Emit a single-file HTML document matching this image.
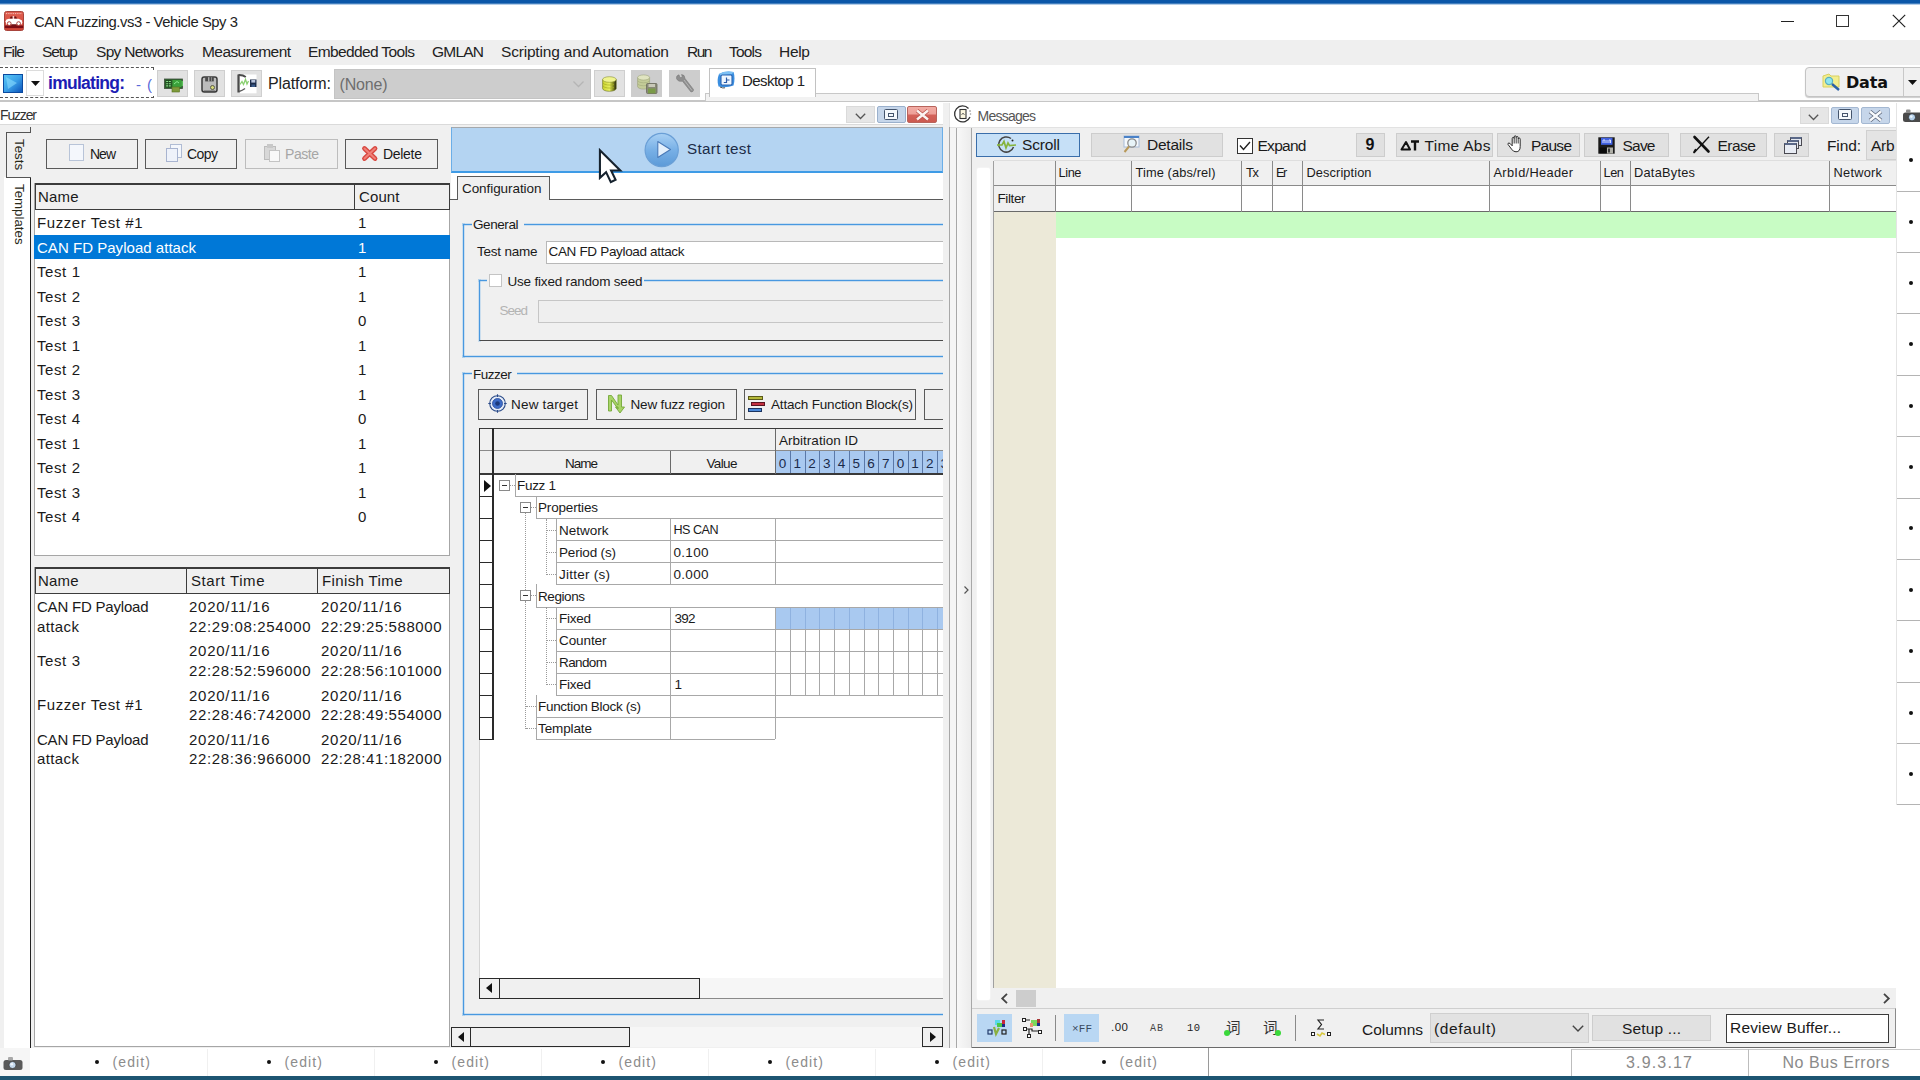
<!DOCTYPE html>
<html><head><meta charset="utf-8"><title>CAN Fuzzing.vs3 - Vehicle Spy 3</title>
<style>
html,body{margin:0;padding:0;}
body{width:1920px;height:1080px;overflow:hidden;position:relative;background:#fff;font-family:"Liberation Sans", sans-serif;}
.a{position:absolute;box-sizing:border-box;}
.t{position:absolute;white-space:pre;}
svg{position:absolute;overflow:visible;}
</style></head><body>
<div class="a" style="left:0px;top:0px;width:1920px;height:5px;background:linear-gradient(#0b57a8 0,#0b57a8 3px,#7aa6d4 4px,#eef4fb 5px);"></div>
<svg style="left:4px;top:11px" width="20" height="20" viewBox="0 0 20 20"><defs><linearGradient id="ai" x1="0" y1="0" x2="0" y2="1"><stop offset="0" stop-color="#e06052"/><stop offset="1" stop-color="#d04436"/></linearGradient></defs><rect x="0.500" y="0.500" width="19" height="19" rx="2" fill="url(#ai)" stroke="#a8443c"/><path d="M2 2.600 L18 2.600" stroke="#f8d8d4" stroke-width="0.900" stroke-dasharray="0.9 0.9"/><rect x="1" y="14.500" width="18" height="2.600" fill="#7a0c14"/><path d="M5.500 7.800 L6.800 5.600 L12 5.600 L13.200 7.800 Z" fill="#6a1010"/><path d="M8.600 5 L10.200 5 L10.200 8 L8.600 8 Z" fill="#fbd0cc"/><path d="M1.600 10.200 L2.400 8.400 L5 7.800 L14.500 7.800 L17.800 9.200 L18.400 11.800 L17.500 13.600 L2.200 13.600 Z" fill="#fff"/><circle cx="5.200" cy="12.600" r="1.900" fill="#fff" stroke="#a03028" stroke-width="0.900"/><circle cx="14.600" cy="12.600" r="1.900" fill="#fff" stroke="#a03028" stroke-width="0.900"/><rect x="7.400" y="13.400" width="5" height="1.300" fill="#5a0810"/></svg>
<span class="t" style="left:34px;top:14.77px;font-size:14.8px;line-height:14.8px;color:#222;letter-spacing:-0.438px;">CAN Fuzzing.vs3 - Vehicle Spy 3</span>
<div class="a" style="left:1781px;top:21px;width:13px;height:1px;background:#222;"></div>
<div class="a" style="left:1836px;top:15px;width:13px;height:12px;border:1px solid #333;"></div>
<svg style="left:1892px;top:14px" width="14" height="14" viewBox="0 0 14 14"><path d="M0.8 0.8 L13.2 13.2 M13.2 0.8 L0.8 13.2" stroke="#222" stroke-width="1.2" fill="none"/></svg>
<div class="a" style="left:0px;top:40px;width:1920px;height:25px;background:#efefef;"></div>
<span class="t" style="left:3px;top:44.38px;font-size:15.5px;line-height:15.5px;color:#222;letter-spacing:-0.995px;">File</span>
<span class="t" style="left:42px;top:44.38px;font-size:15.5px;line-height:15.5px;color:#222;letter-spacing:-1.129px;">Setup</span>
<span class="t" style="left:96px;top:44.38px;font-size:15.5px;line-height:15.5px;color:#222;letter-spacing:-0.693px;">Spy Networks</span>
<span class="t" style="left:202px;top:44.38px;font-size:15.5px;line-height:15.5px;color:#222;letter-spacing:-0.577px;">Measurement</span>
<span class="t" style="left:308px;top:44.38px;font-size:15.5px;line-height:15.5px;color:#222;letter-spacing:-0.630px;">Embedded Tools</span>
<span class="t" style="left:432px;top:44.38px;font-size:15.5px;line-height:15.5px;color:#222;letter-spacing:-0.781px;">GMLAN</span>
<span class="t" style="left:501px;top:44.38px;font-size:15.5px;line-height:15.5px;color:#222;letter-spacing:-0.189px;">Scripting and Automation</span>
<span class="t" style="left:687px;top:44.38px;font-size:15.5px;line-height:15.5px;color:#222;letter-spacing:-1.500px;">Run</span>
<span class="t" style="left:729px;top:44.38px;font-size:15.5px;line-height:15.5px;color:#222;letter-spacing:-0.797px;">Tools</span>
<span class="t" style="left:779px;top:44.38px;font-size:15.5px;line-height:15.5px;color:#222;letter-spacing:-0.297px;">Help</span>
<div class="a" style="left:0px;top:100px;width:1920px;height:2px;background:#c6c6c6;"></div>
<div class="a" style="left:0px;top:67px;width:154px;height:31px;border:1px dashed #555;border-left:none;"></div>
<svg style="left:3px;top:74px" width="20" height="19" viewBox="0 0 20 19"><defs><linearGradient id="gb" x1="0" y1="0" x2="1" y2="1"><stop offset="0" stop-color="#59c8f5"/><stop offset="0.5" stop-color="#3aa0e8"/><stop offset="1" stop-color="#0a50b8"/></linearGradient></defs><rect x="0.5" y="0.5" width="19" height="18" fill="url(#gb)" stroke="#0a4aa0"/><path d="M3 3 L14 9 L5 15 Z" fill="#8fe0ff" opacity="0.55"/></svg>
<div class="a" style="left:26px;top:70px;width:18px;height:26px;background:#fff;border:1px solid #dcdcdc;"></div>
<svg style="left:31px;top:81px" width="9" height="5" viewBox="0 0 9 5"><path d="M0 0 L9 0 L4.5 5 Z" fill="#111"/></svg>
<span class="t" style="left:48px;top:75.19px;font-size:17.5px;line-height:17.5px;color:#1c1cb4;font-weight:bold;letter-spacing:-0.734px;">imulating:</span>
<span class="t" style="left:136px;top:77.30px;font-size:15px;line-height:15px;color:#5a6ad8;letter-spacing:0.914px;">- (</span>
<div class="a" style="left:152px;top:70px;width:3px;height:26px;background:#fff;"></div>
<div class="a" style="left:157px;top:70px;width:31px;height:27px;background:#e2e2e2;border:1px solid #cfcfcf;"></div>
<div class="a" style="left:194px;top:70px;width:31px;height:27px;background:#e2e2e2;border:1px solid #cfcfcf;"></div>
<div class="a" style="left:231px;top:70px;width:31px;height:27px;background:#e2e2e2;border:1px solid #cfcfcf;"></div>
<svg style="left:164px;top:78px" width="20" height="15" viewBox="0 0 20 15"><rect x="0.500" y="1" width="18" height="9.500" fill="#2e6a2c" stroke="#3a4a3a" stroke-width="0.800"/><rect x="1.500" y="2" width="6" height="7.500" fill="#1e4a1e"/><path d="M2.200 3.500 H6.800 M2.200 5.700 H6.800 M2.200 7.900 H6.800" stroke="#8ae08a" stroke-width="1.100"/><path d="M4.500 2 V9.500" stroke="#1e4a1e" stroke-width="0.800"/><rect x="8.500" y="2" width="9" height="7" fill="#3aa03a"/><path d="M10 6 L13 3.500 L15 5" stroke="#8ae890" stroke-width="1" fill="none"/><rect x="17.500" y="3" width="1.500" height="5" fill="#58c058"/><rect x="8" y="9" width="7.500" height="5" fill="#7e9a3a" stroke="#56701e" stroke-width="0.600"/></svg>
<svg style="left:201px;top:75.500px" width="17" height="17" viewBox="0 0 17 17"><rect x="1" y="1" width="15" height="15" rx="2.200" fill="#bcbcbc" stroke="#3a3a3a" stroke-width="1.500"/><rect x="4.200" y="1.200" width="8.600" height="4.200" fill="#4a4a4a"/><rect x="7.300" y="1.200" width="1" height="4.200" fill="#d8d8d8"/><rect x="10" y="1.200" width="0.800" height="4.200" fill="#9a9a9a"/><circle cx="11.500" cy="11.500" r="2" fill="#d8dc78" stroke="#5a5a4a" stroke-width="1"/><rect x="3" y="14.600" width="11" height="1.200" fill="#4a4a4a"/></svg>
<svg style="left:237px;top:73.500px" width="21" height="20" viewBox="0 0 21 20"><rect x="3" y="0.500" width="16.500" height="18.800" fill="#fff"/><path d="M1.500 0.500 V18.500" stroke="#4a4a4a" stroke-width="2.200"/><path d="M1.500 1 Q6 0.800 8.800 3" stroke="#4a4a4a" stroke-width="1.800" fill="none"/><path d="M2 17.500 Q5.500 16.500 8 14.500" stroke="#5a5a5a" stroke-width="1.400" fill="none"/><path d="M3 10.500 L5 7.500 L6.500 10.500 L8.500 5.500 L10 10 L11.500 7" stroke="#8ad070" stroke-width="1.300" fill="none"/><rect x="13" y="5.500" width="6.500" height="7.500" fill="#1c2c4a"/><rect x="14.300" y="6" width="4" height="2.600" fill="#b8c4dc"/><rect x="14.500" y="10.500" width="3.500" height="2.500" fill="#3a5a8a"/></svg>
<span class="t" style="left:268px;top:76.46px;font-size:16px;line-height:16px;color:#222;letter-spacing:-0.127px;">Platform:</span>
<div class="a" style="left:334px;top:69px;width:257px;height:30px;background:#cdcdcd;border:1px solid #c4c4c4;"></div>
<span class="t" style="left:339.5px;top:77.46px;font-size:16px;line-height:16px;color:#6e6e6e;letter-spacing:-0.181px;">(None)</span>
<svg style="left:573px;top:81px" width="11" height="7" viewBox="0 0 11 7"><path d="M0.5 0.5 L5.5 5.5 L10.5 0.5" stroke="#b5b5b5" stroke-width="1.3" fill="none"/></svg>
<div class="a" style="left:594px;top:70px;width:31px;height:27px;background:#e2e2e2;border:1px solid #cfcfcf;"></div>
<div class="a" style="left:631px;top:70px;width:31px;height:27px;background:#cdcdcd;"></div>
<div class="a" style="left:669px;top:70px;width:31px;height:27px;background:#cdcdcd;"></div>
<svg style="left:602px;top:75.500px" width="15" height="16" viewBox="0 0 15 16"><defs><linearGradient id="dbg" x1="0" y1="0" x2="1" y2="0"><stop offset="0" stop-color="#c8d030"/><stop offset="0.500" stop-color="#e8f060"/><stop offset="0.800" stop-color="#7a8020"/><stop offset="1" stop-color="#1a1a0a"/></linearGradient></defs><path d="M0.600 3.500 L0.600 12.500 A6.800 2.800 0 0 0 14.200 12.500 L14.200 3.500 Z" fill="url(#dbg)" stroke="#6a7020" stroke-width="0.600"/><ellipse cx="7.400" cy="3.500" rx="6.800" ry="2.800" fill="#f0f490" stroke="#8a9030" stroke-width="0.600"/><path d="M1 7 A6.800 2.600 0 0 0 12 8.500 M1 10 A6.800 2.600 0 0 0 12 11.500" stroke="#a8b020" stroke-width="0.700" fill="none"/></svg>
<svg style="left:637px;top:73.500px" width="21" height="20" viewBox="0 0 21 20"><path d="M0.600 3.500 L0.600 12.500 A6 2.600 0 0 0 12.600 12.500 L12.600 3.500 Z" fill="#c4cc98" stroke="#9aa078" stroke-width="0.600"/><ellipse cx="6.600" cy="3.500" rx="6" ry="2.600" fill="#e0e4c0" stroke="#a0a680" stroke-width="0.600"/><path d="M0.800 7 A6 2.400 0 0 0 12.400 7 M0.800 10 A6 2.400 0 0 0 12.400 10" stroke="#a8b080" stroke-width="0.700" fill="none"/><rect x="9.500" y="9.500" width="10.500" height="10" rx="1" fill="#8a8a78" stroke="#6a6a5a" stroke-width="0.800"/><rect x="11.500" y="10" width="6.500" height="3" fill="#c8c8b8"/><rect x="11" y="14.500" width="7.500" height="4.800" fill="#7a9a48"/></svg>
<svg style="left:675px;top:74px" width="20" height="19" viewBox="0 0 20 19"><path d="M1.500 4.500 Q1 1.500 4 0.800 L5 3.800 L7.500 3 L6.500 0.600 Q9.800 0.600 10 4.500 L18.500 15.500 Q18.800 17.800 16 18 L7.500 7.200 Q3 8 1.500 4.500 Z" fill="#8e8e8e" stroke="#7a7a7a" stroke-width="0.600"/><path d="M9 6 L17 16.500" stroke="#b4b4b4" stroke-width="1"/></svg>
<div class="a" style="left:705px;top:93px;width:1054px;height:8px;background:#f2f2f2;border:1px solid #c8c8c8;border-bottom:none;"></div>
<div class="a" style="left:709px;top:68px;width:107px;height:29px;background:#fff;border:1px solid #c2c2c2;border-bottom:none;"></div>
<svg style="left:717px;top:71px" width="19" height="18" viewBox="0 0 19 18"><path d="M2 3 Q8 -0.500 16.500 1 Q18.500 7 16.500 14.500 Q9 17.500 1.500 15.500 Q-0.500 9 2 3 Z" fill="#3a8ee0"/><path d="M2 3 Q8 -0.500 16.500 1 L15 3 L3.500 4.500 Z" fill="#7cc0f4"/><rect x="4" y="4" width="11" height="10" rx="1.200" fill="#eef6ff" stroke="#2a62b0" stroke-width="1.100"/><path d="M9.500 6.500 V11.500 H6.800 M9.500 9 H12.500" stroke="#2a5aa8" stroke-width="1.200" fill="none"/><path d="M3 16 Q6 17.500 8 16.800" stroke="#555" stroke-width="1" fill="none"/></svg>
<span class="t" style="left:742px;top:73.30px;font-size:15px;line-height:15px;color:#222;letter-spacing:-0.568px;">Desktop 1</span>
<div class="a" style="left:1805px;top:67px;width:120px;height:30px;background:#f0f0f0;border:1px solid #c4c4c4;border-radius:4px;box-shadow:0 1px 1px #ccc;"></div>
<div class="a" style="left:1903px;top:68px;width:1px;height:28px;background:#c8c8c8;"></div>
<svg style="left:1822px;top:73px" width="20" height="18" viewBox="0 0 20 18"><path d="M1 3 L7 1 L9 3 L17 3 L17 14 L1 14 Z" fill="#f2ee8e" stroke="#d8d060"/><circle cx="7" cy="8" r="3.6" fill="#8fe6ee" stroke="#5ab0c0" stroke-width="1.2"/><path d="M10 11 L17 17" stroke="#2a62a8" stroke-width="2.4"/></svg>
<span class="t" style="left:1846px;top:75.46px;font-size:16px;line-height:16px;color:#111;font-weight:bold;font-family:'DejaVu Sans', sans-serif;letter-spacing:-0.177px;">Data</span>
<svg style="left:1908px;top:80px" width="9" height="5" viewBox="0 0 9 5"><path d="M0 0 L9 0 L4.5 5 Z" fill="#111"/></svg>
<div class="a" style="left:0px;top:124px;width:949px;height:924px;background:#f0f0f0;"></div>
<div class="a" style="left:0px;top:124px;width:943px;height:1px;background:#dadada;"></div>
<div class="a" style="left:943px;top:103px;width:6px;height:22px;background:#f0f0f0;"></div>
<span class="t" style="left:0px;top:108.15px;font-size:14px;line-height:14px;color:#333;letter-spacing:-1.159px;">Fuzzer</span>
<div class="a" style="left:846px;top:106px;width:29px;height:17px;background:#e6e6e6;border:1px solid #dadada;"></div>
<svg style="left:855px;top:113px" width="11" height="7" viewBox="0 0 11 7"><path d="M0.800 0.800 L5.500 5.500 L10.200 0.800" stroke="#555" stroke-width="1.300" fill="none"/></svg>
<div class="a" style="left:877px;top:106px;width:29px;height:17px;background:#c6d6ea;border:1px solid #9ab0cc;border-radius:2px;"></div>
<div class="a" style="left:884px;top:108.5px;width:14px;height:11px;background:#f4f8fc;border:1px solid #44546c;border-radius:1.5px;border-top-width:1.5px;"></div>
<div class="a" style="left:888px;top:112.5px;width:6px;height:4px;background:#f4f8fc;border:1px solid #44546c;"></div>
<div class="a" style="left:907px;top:106px;width:30px;height:17px;border:1px solid #b8645c;border-radius:2px;background:linear-gradient(#f2aca4,#eea098 48%,#d4625a 52%,#cc5a50);"></div>
<svg style="left:914.5px;top:108.5px" width="15" height="12" viewBox="0 0 15 12"><path d="M2 1.500 L13 10.500 M13 1.500 L2 10.500" stroke="#b85048" stroke-width="4" fill="none"/><path d="M2 1.500 L13 10.500 M13 1.500 L2 10.500" stroke="#fbf4f2" stroke-width="2.400" fill="none"/></svg>
<div class="a" style="left:4px;top:177px;width:26px;height:871px;background:#fff;"></div>
<div class="a" style="left:30px;top:177px;width:1px;height:871px;background:#222;"></div>
<div class="a" style="left:6px;top:132px;width:25px;height:46px;background:#f0f0f0;border:1px solid #555;border-right:none;"></div>
<div class="a" style="left:30px;top:127px;width:1px;height:6px;background:#555;"></div>
<div class="a" style="left:22px;top:132px;width:9px;height:1px;background:#555;"></div>
<span class="t" style="left:25.5px;top:139px;font-size:13.3px;line-height:13.3px;color:#2a2a18;transform-origin:0 0;transform:rotate(90deg);letter-spacing:0.0px;">Tests</span>
<span class="t" style="left:25.5px;top:183.5px;font-size:13.3px;line-height:13.3px;color:#2a2a18;transform-origin:0 0;transform:rotate(90deg);letter-spacing:0.0px;">Templates</span>
<div class="a" style="left:46px;top:139px;width:92px;height:30px;background:#f0f0f0;border:1px solid #5a5a5a;"></div>
<div class="a" style="left:145px;top:139px;width:92px;height:30px;background:#f0f0f0;border:1px solid #5a5a5a;"></div>
<div class="a" style="left:245px;top:139px;width:93px;height:30px;background:#f0f0f0;border:1px solid #bdbdbd;"></div>
<div class="a" style="left:345px;top:139px;width:93px;height:30px;background:#f0f0f0;border:1px solid #5a5a5a;"></div>
<div class="a" style="left:69px;top:144px;width:15px;height:17px;background:#f4f7fc;border:1px solid #b8c4d8;"></div>
<span class="t" style="left:90px;top:147.15px;font-size:14px;line-height:14px;color:#1a1a1a;letter-spacing:-1.008px;">New</span>
<div class="a" style="left:170px;top:144px;width:12px;height:14px;background:#f4f7fc;border:1px solid #b0bcd4;"></div>
<div class="a" style="left:166px;top:148px;width:12px;height:14px;background:#eef2fa;border:1px solid #a8b4d0;"></div>
<span class="t" style="left:187px;top:147.15px;font-size:14px;line-height:14px;color:#1a1a1a;letter-spacing:-0.562px;">Copy</span>
<div class="a" style="left:264px;top:146px;width:12px;height:14px;background:#d8d8d8;border:1px solid #bcbcbc;"></div>
<div class="a" style="left:267px;top:144px;width:6px;height:4px;background:#c8c8c8;"></div>
<div class="a" style="left:269px;top:150px;width:11px;height:12px;background:#f8f8f8;border:1px solid #c4c4c4;"></div>
<span class="t" style="left:285px;top:147.15px;font-size:14px;line-height:14px;color:#a6a6a6;letter-spacing:-0.453px;">Paste</span>
<svg style="left:361px;top:145px" width="18" height="17" viewBox="0 0 18 17"><path d="M3.500 3.500 L14 13.500 M14 3.500 L3.500 13.500" stroke="#d84840" stroke-width="4.800" stroke-linecap="round" fill="none"/><path d="M3.500 3.500 L14 13.500 M14 3.500 L3.500 13.500" stroke="#f08078" stroke-width="2" stroke-linecap="round" fill="none"/></svg>
<span class="t" style="left:383px;top:147.15px;font-size:14px;line-height:14px;color:#1a1a1a;letter-spacing:-0.294px;">Delete</span>
<div class="a" style="left:34px;top:183px;width:416px;height:373px;background:#fff;border:1px solid #a6a6a6;"></div>
<div class="a" style="left:35px;top:183px;width:415px;height:27px;background:#f0f0f0;border:1px solid #3c3c3c;border-top-width:2px;"></div>
<div class="a" style="left:354px;top:185px;width:1px;height:24px;background:#3c3c3c;"></div>
<span class="t" style="left:38px;top:189.30px;font-size:15px;line-height:15px;color:#1a1a1a;letter-spacing:0.161px;">Name</span>
<span class="t" style="left:359px;top:189.30px;font-size:15px;line-height:15px;color:#1a1a1a;letter-spacing:0.117px;">Count</span>
<span class="t" style="left:37px;top:215.30px;font-size:15px;line-height:15px;color:#1a1a1a;letter-spacing:0.569px;">Fuzzer Test #1</span>
<span class="t" style="left:358px;top:215.30px;font-size:15px;line-height:15px;color:#1a1a1a;">1</span>
<div class="a" style="left:34px;top:235px;width:415.5px;height:24px;background:#0078d7;"></div>
<span class="t" style="left:37px;top:239.80px;font-size:15px;line-height:15px;color:#fff;letter-spacing:0.030px;">CAN FD Payload attack</span>
<span class="t" style="left:358px;top:239.80px;font-size:15px;line-height:15px;color:#fff;">1</span>
<span class="t" style="left:37px;top:264.30px;font-size:15px;line-height:15px;color:#1a1a1a;letter-spacing:0.594px;">Test 1</span>
<span class="t" style="left:358px;top:264.30px;font-size:15px;line-height:15px;color:#1a1a1a;">1</span>
<span class="t" style="left:37px;top:288.80px;font-size:15px;line-height:15px;color:#1a1a1a;letter-spacing:0.594px;">Test 2</span>
<span class="t" style="left:358px;top:288.80px;font-size:15px;line-height:15px;color:#1a1a1a;">1</span>
<span class="t" style="left:37px;top:313.30px;font-size:15px;line-height:15px;color:#1a1a1a;letter-spacing:0.594px;">Test 3</span>
<span class="t" style="left:358px;top:313.30px;font-size:15px;line-height:15px;color:#1a1a1a;">0</span>
<span class="t" style="left:37px;top:337.80px;font-size:15px;line-height:15px;color:#1a1a1a;letter-spacing:0.594px;">Test 1</span>
<span class="t" style="left:358px;top:337.80px;font-size:15px;line-height:15px;color:#1a1a1a;">1</span>
<span class="t" style="left:37px;top:362.30px;font-size:15px;line-height:15px;color:#1a1a1a;letter-spacing:0.594px;">Test 2</span>
<span class="t" style="left:358px;top:362.30px;font-size:15px;line-height:15px;color:#1a1a1a;">1</span>
<span class="t" style="left:37px;top:386.80px;font-size:15px;line-height:15px;color:#1a1a1a;letter-spacing:0.594px;">Test 3</span>
<span class="t" style="left:358px;top:386.80px;font-size:15px;line-height:15px;color:#1a1a1a;">1</span>
<span class="t" style="left:37px;top:411.30px;font-size:15px;line-height:15px;color:#1a1a1a;letter-spacing:0.594px;">Test 4</span>
<span class="t" style="left:358px;top:411.30px;font-size:15px;line-height:15px;color:#1a1a1a;">0</span>
<span class="t" style="left:37px;top:435.80px;font-size:15px;line-height:15px;color:#1a1a1a;letter-spacing:0.594px;">Test 1</span>
<span class="t" style="left:358px;top:435.80px;font-size:15px;line-height:15px;color:#1a1a1a;">1</span>
<span class="t" style="left:37px;top:460.30px;font-size:15px;line-height:15px;color:#1a1a1a;letter-spacing:0.594px;">Test 2</span>
<span class="t" style="left:358px;top:460.30px;font-size:15px;line-height:15px;color:#1a1a1a;">1</span>
<span class="t" style="left:37px;top:484.80px;font-size:15px;line-height:15px;color:#1a1a1a;letter-spacing:0.594px;">Test 3</span>
<span class="t" style="left:358px;top:484.80px;font-size:15px;line-height:15px;color:#1a1a1a;">1</span>
<span class="t" style="left:37px;top:509.30px;font-size:15px;line-height:15px;color:#1a1a1a;letter-spacing:0.594px;">Test 4</span>
<span class="t" style="left:358px;top:509.30px;font-size:15px;line-height:15px;color:#1a1a1a;">0</span>
<div class="a" style="left:34px;top:567px;width:416px;height:480px;background:#fff;border:1px solid #a6a6a6;"></div>
<div class="a" style="left:35px;top:567px;width:415px;height:27px;background:#f0f0f0;border:1px solid #3c3c3c;border-top-width:2px;"></div>
<div class="a" style="left:186px;top:569px;width:1px;height:24px;background:#3c3c3c;"></div>
<div class="a" style="left:317px;top:569px;width:1px;height:24px;background:#3c3c3c;"></div>
<span class="t" style="left:38px;top:573.30px;font-size:15px;line-height:15px;color:#1a1a1a;letter-spacing:0.161px;">Name</span>
<span class="t" style="left:191px;top:573.30px;font-size:15px;line-height:15px;color:#1a1a1a;letter-spacing:0.571px;">Start Time</span>
<span class="t" style="left:322px;top:573.30px;font-size:15px;line-height:15px;color:#1a1a1a;letter-spacing:0.381px;">Finish Time</span>
<span class="t" style="left:37px;top:599.30px;font-size:15px;line-height:15px;color:#1a1a1a;letter-spacing:-0.209px;">CAN FD Payload</span>
<span class="t" style="left:37px;top:618.90px;font-size:15px;line-height:15px;color:#1a1a1a;letter-spacing:0.394px;">attack</span>
<span class="t" style="left:189px;top:599.30px;font-size:15px;line-height:15px;color:#1a1a1a;letter-spacing:0.726px;">2020/11/16</span>
<span class="t" style="left:189px;top:618.90px;font-size:15px;line-height:15px;color:#1a1a1a;letter-spacing:0.634px;">22:29:08:254000</span>
<span class="t" style="left:321px;top:599.30px;font-size:15px;line-height:15px;color:#1a1a1a;letter-spacing:0.726px;">2020/11/16</span>
<span class="t" style="left:321px;top:618.90px;font-size:15px;line-height:15px;color:#1a1a1a;letter-spacing:0.562px;">22:29:25:588000</span>
<span class="t" style="left:37px;top:653.20px;font-size:15px;line-height:15px;color:#1a1a1a;letter-spacing:0.594px;">Test 3</span>
<span class="t" style="left:189px;top:643.40px;font-size:15px;line-height:15px;color:#1a1a1a;letter-spacing:0.726px;">2020/11/16</span>
<span class="t" style="left:189px;top:663.00px;font-size:15px;line-height:15px;color:#1a1a1a;letter-spacing:0.634px;">22:28:52:596000</span>
<span class="t" style="left:321px;top:643.40px;font-size:15px;line-height:15px;color:#1a1a1a;letter-spacing:0.726px;">2020/11/16</span>
<span class="t" style="left:321px;top:663.00px;font-size:15px;line-height:15px;color:#1a1a1a;letter-spacing:0.562px;">22:28:56:101000</span>
<span class="t" style="left:37px;top:697.30px;font-size:15px;line-height:15px;color:#1a1a1a;letter-spacing:0.569px;">Fuzzer Test #1</span>
<span class="t" style="left:189px;top:687.50px;font-size:15px;line-height:15px;color:#1a1a1a;letter-spacing:0.726px;">2020/11/16</span>
<span class="t" style="left:189px;top:707.10px;font-size:15px;line-height:15px;color:#1a1a1a;letter-spacing:0.634px;">22:28:46:742000</span>
<span class="t" style="left:321px;top:687.50px;font-size:15px;line-height:15px;color:#1a1a1a;letter-spacing:0.726px;">2020/11/16</span>
<span class="t" style="left:321px;top:707.10px;font-size:15px;line-height:15px;color:#1a1a1a;letter-spacing:0.562px;">22:28:49:554000</span>
<span class="t" style="left:37px;top:731.60px;font-size:15px;line-height:15px;color:#1a1a1a;letter-spacing:-0.209px;">CAN FD Payload</span>
<span class="t" style="left:37px;top:751.20px;font-size:15px;line-height:15px;color:#1a1a1a;letter-spacing:0.394px;">attack</span>
<span class="t" style="left:189px;top:731.60px;font-size:15px;line-height:15px;color:#1a1a1a;letter-spacing:0.726px;">2020/11/16</span>
<span class="t" style="left:189px;top:751.20px;font-size:15px;line-height:15px;color:#1a1a1a;letter-spacing:0.634px;">22:28:36:966000</span>
<span class="t" style="left:321px;top:731.60px;font-size:15px;line-height:15px;color:#1a1a1a;letter-spacing:0.726px;">2020/11/16</span>
<span class="t" style="left:321px;top:751.20px;font-size:15px;line-height:15px;color:#1a1a1a;letter-spacing:0.562px;">22:28:41:182000</span>
<div class="a" style="left:451px;top:173px;width:492px;height:26px;background:#fff;"></div>
<div class="a" style="left:451px;top:127px;width:492px;height:46px;background:#b4d4f2;border:1px solid #6aaee8;border-top-color:#a4a8ac;border-bottom:2px solid #3e9be6;"></div>
<svg style="left:644px;top:132px" width="36" height="36" viewBox="0 0 36 36"><defs><linearGradient id="pg" x1="0" y1="0" x2="0" y2="1"><stop offset="0" stop-color="#a8d0f4"/><stop offset="0.5" stop-color="#78b0e6"/><stop offset="1" stop-color="#5c9ad8"/></linearGradient></defs><circle cx="17.7" cy="18" r="16.6" fill="url(#pg)" stroke="#6a9fd6" stroke-width="1.2"/><path d="M13.8 9.5 L26.5 17.5 L13.8 25.5 Z" fill="#e4f0fc" stroke="#4a7ab8" stroke-width="1.1" stroke-linejoin="round"/></svg>
<span class="t" style="left:687px;top:141.33px;font-size:15.2px;line-height:15.2px;color:#1c2c48;letter-spacing:0.358px;">Start test</span>
<div class="a" style="left:549px;top:199px;width:394px;height:1px;background:#5a5a5a;"></div>
<div class="a" style="left:457px;top:176px;width:93px;height:24px;background:#f0f0f0;border:1px solid #5a5a5a;border-bottom:none;"></div>
<div class="a" style="left:450px;top:199px;width:8px;height:1px;background:#5a5a5a;"></div>
<span class="t" style="left:462px;top:182.37px;font-size:13.5px;line-height:13.5px;color:#1a1a1a;letter-spacing:-0.068px;">Configuration</span>
<div class="a" style="left:462px;top:223px;width:3px;height:135px;background:rgba(74,159,230,0.22);"></div>
<div class="a" style="left:462px;top:223px;width:481px;height:3px;background:rgba(74,159,230,0.22);"></div>
<div class="a" style="left:462px;top:355px;width:481px;height:3px;background:rgba(74,159,230,0.22);"></div>
<div class="a" style="left:463px;top:224px;width:480px;height:133px;border:1px solid #4898e0;border-right:none;border-bottom-color:#4898e0;"></div>
<div class="a" style="left:471.5px;top:222px;width:52.0px;height:5px;background:#f0f0f0;"></div>
<span class="t" style="left:473px;top:217.57px;font-size:13.5px;line-height:13.5px;color:#1a1a1a;letter-spacing:-0.422px;">General</span>
<span class="t" style="left:477px;top:244.77px;font-size:13.5px;line-height:13.5px;color:#1a1a1a;letter-spacing:-0.223px;">Test name</span>
<div class="a" style="left:546px;top:241px;width:397px;height:23px;background:#fff;border:1px solid #b8b8b8;border-right:none;"></div>
<span class="t" style="left:548.5px;top:244.77px;font-size:13.5px;line-height:13.5px;color:#1a1a1a;letter-spacing:-0.328px;">CAN FD Payload attack</span>
<div class="a" style="left:478px;top:279px;width:3px;height:63px;background:rgba(74,159,230,0.22);"></div>
<div class="a" style="left:478px;top:279px;width:465px;height:3px;background:rgba(74,159,230,0.22);"></div>
<div class="a" style="left:479px;top:280px;width:464px;height:61px;border:1px solid #4898e0;border-right:none;border-bottom-color:#4a4a4a;"></div>
<div class="a" style="left:487px;top:278px;width:157px;height:5px;background:#f0f0f0;"></div>
<div class="a" style="left:489px;top:274px;width:13px;height:13px;background:#fff;border:1px solid #c4c4c4;"></div>
<span class="t" style="left:507.5px;top:274.57px;font-size:13.5px;line-height:13.5px;color:#1a1a1a;letter-spacing:-0.191px;">Use fixed random seed</span>
<span class="t" style="left:499.5px;top:304.07px;font-size:13.5px;line-height:13.5px;color:#b4b4b4;letter-spacing:-1.010px;">Seed</span>
<div class="a" style="left:538px;top:300px;width:405px;height:23px;background:#efefef;border:1px solid #c6c6c6;border-right:none;"></div>
<div class="a" style="left:462px;top:372px;width:3px;height:644px;background:rgba(74,159,230,0.22);"></div>
<div class="a" style="left:462px;top:372px;width:481px;height:3px;background:rgba(74,159,230,0.22);"></div>
<div class="a" style="left:462px;top:1013px;width:481px;height:3px;background:rgba(74,159,230,0.22);"></div>
<div class="a" style="left:463px;top:373px;width:480px;height:642px;border:1px solid #4898e0;border-right:none;border-bottom-color:#4898e0;"></div>
<div class="a" style="left:471.5px;top:371px;width:45.0px;height:5px;background:#f0f0f0;"></div>
<span class="t" style="left:473px;top:367.77px;font-size:13.5px;line-height:13.5px;color:#1a1a1a;letter-spacing:-0.493px;">Fuzzer</span>
<div class="a" style="left:478px;top:389px;width:110px;height:31px;background:#f0f0f0;border:1px solid #5a5a5a;"></div>
<div class="a" style="left:596px;top:389px;width:141px;height:31px;background:#f0f0f0;border:1px solid #5a5a5a;"></div>
<div class="a" style="left:744px;top:389px;width:172px;height:31px;background:#f0f0f0;border:1px solid #5a5a5a;"></div>
<div class="a" style="left:924px;top:389px;width:19px;height:31px;background:#f0f0f0;border:1px solid #5a5a5a;border-right:none;"></div>
<svg style="left:488px;top:394px" width="19" height="19" viewBox="0 0 19 19"><circle cx="9.500" cy="9.500" r="7.800" fill="#e4ecf8" stroke="#2a4a88" stroke-width="1.100"/><circle cx="9.500" cy="9.500" r="5" fill="#3c6cc8" stroke="#2a4a98" stroke-width="0.800"/><circle cx="9.500" cy="9.500" r="2.300" fill="#1c3a7c"/><path d="M9.500 0.300 V3 M9.500 16 V18.700 M0.300 9.500 H3 M16 9.500 H18.700" stroke="#2a4a88" stroke-width="1.100"/></svg>
<span class="t" style="left:511px;top:397.57px;font-size:13.5px;line-height:13.5px;color:#1a1a1a;letter-spacing:0.191px;">New target</span>
<svg style="left:607px;top:393.500px" width="19" height="20" viewBox="0 0 19 20"><path d="M1.500 17 L1.500 1.500 L4.500 1.500 L11 11 L11 1 L14.500 1 L14.500 13 L17.500 13 L13 19 L8.500 13 L11 13 L11 14.800 L4.500 6 L4.500 17 Z" fill="#a8d468" stroke="#74a838" stroke-width="0.900" stroke-linejoin="round"/></svg>
<span class="t" style="left:630.5px;top:397.57px;font-size:13.5px;line-height:13.5px;color:#1a1a1a;letter-spacing:-0.164px;">New fuzz region</span>
<div class="a" style="left:748px;top:395.5px;width:15px;height:4.5px;background:#b4b838;border:1px solid #5a5a1a;"></div>
<div class="a" style="left:751px;top:401.5px;width:14px;height:4.5px;background:#c43040;border:1px solid #5a1420;"></div>
<div class="a" style="left:748px;top:407.5px;width:13.5px;height:4.5px;background:#4a88d8;border:1px solid #1c3460;"></div>
<span class="t" style="left:771px;top:397.57px;font-size:13.5px;line-height:13.5px;color:#1a1a1a;letter-spacing:-0.188px;">Attach Function Block(s)</span>
<div class="a" style="left:479px;top:428px;width:464px;height:550px;background:#fff;border:1px solid #d4d4d4;border-right:none;border-bottom:none;"></div>
<div class="a" style="left:479px;top:428px;width:464px;height:46px;background:#f0f0f0;"></div>
<div class="a" style="left:479px;top:428px;width:464px;height:1px;background:#3a3a3a;"></div>
<div class="a" style="left:479px;top:450px;width:464px;height:1px;background:#8a8a8a;"></div>
<div class="a" style="left:479px;top:473px;width:464px;height:2px;background:#3a3a3a;"></div>
<div class="a" style="left:479px;top:428px;width:1px;height:312px;background:#2a2a2a;"></div>
<div class="a" style="left:492px;top:428px;width:2px;height:312px;background:#2a2a2a;"></div>
<div class="a" style="left:670px;top:451px;width:1px;height:23px;background:#6a6a6a;"></div>
<div class="a" style="left:775px;top:429px;width:1px;height:45px;background:#6a6a6a;"></div>
<span class="t" style="left:779px;top:434.37px;font-size:13.5px;line-height:13.5px;color:#1a1a1a;letter-spacing:0.017px;">Arbitration ID</span>
<span class="t" style="left:565px;top:457.37px;font-size:13.5px;line-height:13.5px;color:#1a1a1a;letter-spacing:-1.005px;">Name</span>
<span class="t" style="left:706.5px;top:457.37px;font-size:13.5px;line-height:13.5px;color:#1a1a1a;letter-spacing:-0.633px;">Value</span>
<div class="a" style="left:776px;top:451px;width:167px;height:22px;background:#a9c9f0;"></div>
<span class="t" style="left:778.8000000000001px;top:457.37px;font-size:13.5px;line-height:13.5px;color:#1a2a4a;">0</span>
<div class="a" style="left:790px;top:451px;width:1px;height:22px;background:#5a78a8;"></div>
<span class="t" style="left:793.5300000000001px;top:457.37px;font-size:13.5px;line-height:13.5px;color:#1a2a4a;">1</span>
<div class="a" style="left:805px;top:451px;width:1px;height:22px;background:#5a78a8;"></div>
<span class="t" style="left:808.2600000000001px;top:457.37px;font-size:13.5px;line-height:13.5px;color:#1a2a4a;">2</span>
<div class="a" style="left:819px;top:451px;width:1px;height:22px;background:#5a78a8;"></div>
<span class="t" style="left:822.9900000000001px;top:457.37px;font-size:13.5px;line-height:13.5px;color:#1a2a4a;">3</span>
<div class="a" style="left:834px;top:451px;width:1px;height:22px;background:#5a78a8;"></div>
<span class="t" style="left:837.72px;top:457.37px;font-size:13.5px;line-height:13.5px;color:#1a2a4a;">4</span>
<div class="a" style="left:849px;top:451px;width:1px;height:22px;background:#5a78a8;"></div>
<span class="t" style="left:852.45px;top:457.37px;font-size:13.5px;line-height:13.5px;color:#1a2a4a;">5</span>
<div class="a" style="left:864px;top:451px;width:1px;height:22px;background:#5a78a8;"></div>
<span class="t" style="left:867.1800000000001px;top:457.37px;font-size:13.5px;line-height:13.5px;color:#1a2a4a;">6</span>
<div class="a" style="left:878px;top:451px;width:1px;height:22px;background:#5a78a8;"></div>
<span class="t" style="left:881.9100000000001px;top:457.37px;font-size:13.5px;line-height:13.5px;color:#1a2a4a;">7</span>
<div class="a" style="left:893px;top:451px;width:1px;height:22px;background:#5a78a8;"></div>
<span class="t" style="left:896.6400000000001px;top:457.37px;font-size:13.5px;line-height:13.5px;color:#1a2a4a;">0</span>
<div class="a" style="left:908px;top:451px;width:1px;height:22px;background:#5a78a8;"></div>
<span class="t" style="left:911.37px;top:457.37px;font-size:13.5px;line-height:13.5px;color:#1a2a4a;">1</span>
<div class="a" style="left:922px;top:451px;width:1px;height:22px;background:#5a78a8;"></div>
<span class="t" style="left:926.1px;top:457.37px;font-size:13.5px;line-height:13.5px;color:#1a2a4a;">2</span>
<div class="a" style="left:937px;top:451px;width:1px;height:22px;background:#5a78a8;"></div>
<span class="t" style="left:940.5px;top:457.37px;font-size:13.5px;line-height:13.5px;color:#1a2a4a;">3</span>
<div class="a" style="left:479px;top:496px;width:14px;height:1px;background:#2a2a2a;"></div>
<div class="a" style="left:479px;top:518px;width:14px;height:1px;background:#2a2a2a;"></div>
<div class="a" style="left:479px;top:540px;width:14px;height:1px;background:#2a2a2a;"></div>
<div class="a" style="left:479px;top:562px;width:14px;height:1px;background:#2a2a2a;"></div>
<div class="a" style="left:479px;top:584px;width:14px;height:1px;background:#2a2a2a;"></div>
<div class="a" style="left:479px;top:607px;width:14px;height:1px;background:#2a2a2a;"></div>
<div class="a" style="left:479px;top:629px;width:14px;height:1px;background:#2a2a2a;"></div>
<div class="a" style="left:479px;top:651px;width:14px;height:1px;background:#2a2a2a;"></div>
<div class="a" style="left:479px;top:673px;width:14px;height:1px;background:#2a2a2a;"></div>
<div class="a" style="left:479px;top:695px;width:14px;height:1px;background:#2a2a2a;"></div>
<div class="a" style="left:479px;top:717px;width:14px;height:1px;background:#2a2a2a;"></div>
<div class="a" style="left:479px;top:739px;width:14px;height:1px;background:#2a2a2a;"></div>
<div class="a" style="left:515px;top:474px;width:1px;height:22px;background:#a8a8a8;"></div>
<div class="a" style="left:515px;top:496px;width:428px;height:1px;background:#a8a8a8;"></div>
<span class="t" style="left:517px;top:479.37px;font-size:13.5px;line-height:13.5px;color:#1a1a1a;letter-spacing:-0.303px;">Fuzz 1</span>
<div class="a" style="left:536px;top:496px;width:1px;height:22px;background:#a8a8a8;"></div>
<div class="a" style="left:536px;top:518px;width:407px;height:1px;background:#a8a8a8;"></div>
<span class="t" style="left:538px;top:501.44px;font-size:13.5px;line-height:13.5px;color:#1a1a1a;letter-spacing:-0.170px;">Properties</span>
<div class="a" style="left:556px;top:518px;width:1px;height:22px;background:#a8a8a8;"></div>
<div class="a" style="left:556px;top:540px;width:387px;height:1px;background:#a8a8a8;"></div>
<span class="t" style="left:559px;top:523.51px;font-size:13.5px;line-height:13.5px;color:#1a1a1a;letter-spacing:-0.003px;">Network</span>
<div class="a" style="left:670px;top:518px;width:1px;height:22px;background:#a8a8a8;"></div>
<div class="a" style="left:775px;top:518px;width:1px;height:22px;background:#a8a8a8;"></div>
<span class="t" style="left:673.5px;top:524.27px;font-size:12.6px;line-height:12.6px;color:#1a1a1a;letter-spacing:-0.519px;">HS CAN</span>
<div class="a" style="left:556px;top:540px;width:1px;height:22px;background:#a8a8a8;"></div>
<div class="a" style="left:556px;top:562px;width:387px;height:1px;background:#a8a8a8;"></div>
<span class="t" style="left:559px;top:545.58px;font-size:13.5px;line-height:13.5px;color:#1a1a1a;letter-spacing:-0.168px;">Period (s)</span>
<div class="a" style="left:670px;top:540px;width:1px;height:22px;background:#a8a8a8;"></div>
<div class="a" style="left:775px;top:540px;width:1px;height:22px;background:#a8a8a8;"></div>
<span class="t" style="left:673.5px;top:545.58px;font-size:13.5px;line-height:13.5px;color:#1a1a1a;letter-spacing:0.301px;">0.100</span>
<div class="a" style="left:556px;top:562px;width:1px;height:22px;background:#a8a8a8;"></div>
<div class="a" style="left:556px;top:584px;width:387px;height:1px;background:#a8a8a8;"></div>
<span class="t" style="left:559px;top:567.65px;font-size:13.5px;line-height:13.5px;color:#1a1a1a;letter-spacing:0.250px;">Jitter (s)</span>
<div class="a" style="left:670px;top:562px;width:1px;height:22px;background:#a8a8a8;"></div>
<div class="a" style="left:775px;top:562px;width:1px;height:22px;background:#a8a8a8;"></div>
<span class="t" style="left:673.5px;top:567.65px;font-size:13.5px;line-height:13.5px;color:#1a1a1a;letter-spacing:0.301px;">0.000</span>
<div class="a" style="left:536px;top:584px;width:1px;height:23px;background:#a8a8a8;"></div>
<div class="a" style="left:536px;top:607px;width:407px;height:1px;background:#a8a8a8;"></div>
<span class="t" style="left:538px;top:589.72px;font-size:13.5px;line-height:13.5px;color:#1a1a1a;letter-spacing:-0.422px;">Regions</span>
<div class="a" style="left:556px;top:607px;width:1px;height:22px;background:#a8a8a8;"></div>
<div class="a" style="left:556px;top:629px;width:387px;height:1px;background:#a8a8a8;"></div>
<span class="t" style="left:559px;top:611.79px;font-size:13.5px;line-height:13.5px;color:#1a1a1a;letter-spacing:-0.254px;">Fixed</span>
<div class="a" style="left:670px;top:607px;width:1px;height:22px;background:#a8a8a8;"></div>
<div class="a" style="left:775px;top:607px;width:1px;height:22px;background:#a8a8a8;"></div>
<span class="t" style="left:674.5px;top:611.79px;font-size:13.5px;line-height:13.5px;color:#1a1a1a;letter-spacing:-0.766px;">392</span>
<div class="a" style="left:556px;top:629px;width:1px;height:22px;background:#a8a8a8;"></div>
<div class="a" style="left:556px;top:651px;width:387px;height:1px;background:#a8a8a8;"></div>
<span class="t" style="left:559px;top:633.86px;font-size:13.5px;line-height:13.5px;color:#1a1a1a;letter-spacing:-0.089px;">Counter</span>
<div class="a" style="left:670px;top:629px;width:1px;height:22px;background:#a8a8a8;"></div>
<div class="a" style="left:775px;top:629px;width:1px;height:22px;background:#a8a8a8;"></div>
<div class="a" style="left:556px;top:651px;width:1px;height:22px;background:#a8a8a8;"></div>
<div class="a" style="left:556px;top:673px;width:387px;height:1px;background:#a8a8a8;"></div>
<span class="t" style="left:559px;top:655.93px;font-size:13.5px;line-height:13.5px;color:#1a1a1a;letter-spacing:-0.606px;">Random</span>
<div class="a" style="left:670px;top:651px;width:1px;height:22px;background:#a8a8a8;"></div>
<div class="a" style="left:775px;top:651px;width:1px;height:22px;background:#a8a8a8;"></div>
<div class="a" style="left:556px;top:673px;width:1px;height:22px;background:#a8a8a8;"></div>
<div class="a" style="left:556px;top:695px;width:387px;height:1px;background:#a8a8a8;"></div>
<span class="t" style="left:559px;top:678.00px;font-size:13.5px;line-height:13.5px;color:#1a1a1a;letter-spacing:-0.254px;">Fixed</span>
<div class="a" style="left:670px;top:673px;width:1px;height:22px;background:#a8a8a8;"></div>
<div class="a" style="left:775px;top:673px;width:1px;height:22px;background:#a8a8a8;"></div>
<span class="t" style="left:674.5px;top:678.00px;font-size:13.5px;line-height:13.5px;color:#1a1a1a;">1</span>
<div class="a" style="left:536px;top:695px;width:1px;height:22px;background:#a8a8a8;"></div>
<div class="a" style="left:536px;top:717px;width:407px;height:1px;background:#a8a8a8;"></div>
<span class="t" style="left:538px;top:700.07px;font-size:13.5px;line-height:13.5px;color:#1a1a1a;letter-spacing:-0.297px;">Function Block (s)</span>
<div class="a" style="left:670px;top:695px;width:1px;height:22px;background:#a8a8a8;"></div>
<div class="a" style="left:775px;top:695px;width:1px;height:22px;background:#a8a8a8;"></div>
<div class="a" style="left:536px;top:717px;width:1px;height:22px;background:#a8a8a8;"></div>
<div class="a" style="left:536px;top:739px;width:239px;height:1px;background:#a8a8a8;"></div>
<span class="t" style="left:538px;top:722.14px;font-size:13.5px;line-height:13.5px;color:#1a1a1a;letter-spacing:-0.112px;">Template</span>
<div class="a" style="left:670px;top:717px;width:1px;height:22px;background:#a8a8a8;"></div>
<div class="a" style="left:775px;top:717px;width:1px;height:22px;background:#a8a8a8;"></div>
<div class="a" style="left:776px;top:608px;width:167px;height:21px;background:#a9c9f0;"></div>
<div class="a" style="left:790px;top:608px;width:1px;height:21px;background:#8fb2e0;"></div>
<div class="a" style="left:790px;top:629px;width:1px;height:66px;background:#a8a8a8;"></div>
<div class="a" style="left:805px;top:608px;width:1px;height:21px;background:#8fb2e0;"></div>
<div class="a" style="left:805px;top:629px;width:1px;height:66px;background:#a8a8a8;"></div>
<div class="a" style="left:819px;top:608px;width:1px;height:21px;background:#8fb2e0;"></div>
<div class="a" style="left:819px;top:629px;width:1px;height:66px;background:#a8a8a8;"></div>
<div class="a" style="left:834px;top:608px;width:1px;height:21px;background:#8fb2e0;"></div>
<div class="a" style="left:834px;top:629px;width:1px;height:66px;background:#a8a8a8;"></div>
<div class="a" style="left:849px;top:608px;width:1px;height:21px;background:#8fb2e0;"></div>
<div class="a" style="left:849px;top:629px;width:1px;height:66px;background:#a8a8a8;"></div>
<div class="a" style="left:864px;top:608px;width:1px;height:21px;background:#8fb2e0;"></div>
<div class="a" style="left:864px;top:629px;width:1px;height:66px;background:#a8a8a8;"></div>
<div class="a" style="left:878px;top:608px;width:1px;height:21px;background:#8fb2e0;"></div>
<div class="a" style="left:878px;top:629px;width:1px;height:66px;background:#a8a8a8;"></div>
<div class="a" style="left:893px;top:608px;width:1px;height:21px;background:#8fb2e0;"></div>
<div class="a" style="left:893px;top:629px;width:1px;height:66px;background:#a8a8a8;"></div>
<div class="a" style="left:908px;top:608px;width:1px;height:21px;background:#8fb2e0;"></div>
<div class="a" style="left:908px;top:629px;width:1px;height:66px;background:#a8a8a8;"></div>
<div class="a" style="left:922px;top:608px;width:1px;height:21px;background:#8fb2e0;"></div>
<div class="a" style="left:922px;top:629px;width:1px;height:66px;background:#a8a8a8;"></div>
<div class="a" style="left:937px;top:608px;width:1px;height:21px;background:#8fb2e0;"></div>
<div class="a" style="left:937px;top:629px;width:1px;height:66px;background:#a8a8a8;"></div>
<div class="a" style="left:499px;top:480px;width:11px;height:11px;background:#fff;border:1px solid #8a8a8a;"></div>
<div class="a" style="left:502px;top:485px;width:5px;height:1px;background:#333;"></div>
<div class="a" style="left:520px;top:502px;width:11px;height:11px;background:#fff;border:1px solid #8a8a8a;"></div>
<div class="a" style="left:523px;top:507px;width:5px;height:1px;background:#333;"></div>
<div class="a" style="left:520px;top:590px;width:11px;height:11px;background:#fff;border:1px solid #8a8a8a;"></div>
<div class="a" style="left:523px;top:595px;width:5px;height:1px;background:#333;"></div>
<div class="a" style="left:525px;top:513px;width:1px;height:77px;border-left:1px dotted #9a9a9a;"></div>
<div class="a" style="left:525px;top:601px;width:1px;height:128px;border-left:1px dotted #9a9a9a;"></div>
<div class="a" style="left:546px;top:519px;width:1px;height:56px;border-left:1px dotted #9a9a9a;"></div>
<div class="a" style="left:546px;top:607px;width:1px;height:78px;border-left:1px dotted #9a9a9a;"></div>
<div class="a" style="left:547px;top:530px;width:9px;height:1px;border-top:1px dotted #9a9a9a;"></div>
<div class="a" style="left:547px;top:552px;width:9px;height:1px;border-top:1px dotted #9a9a9a;"></div>
<div class="a" style="left:547px;top:574px;width:9px;height:1px;border-top:1px dotted #9a9a9a;"></div>
<div class="a" style="left:547px;top:618px;width:9px;height:1px;border-top:1px dotted #9a9a9a;"></div>
<div class="a" style="left:547px;top:640px;width:9px;height:1px;border-top:1px dotted #9a9a9a;"></div>
<div class="a" style="left:547px;top:662px;width:9px;height:1px;border-top:1px dotted #9a9a9a;"></div>
<div class="a" style="left:547px;top:684px;width:9px;height:1px;border-top:1px dotted #9a9a9a;"></div>
<div class="a" style="left:526px;top:706px;width:10px;height:1px;border-top:1px dotted #9a9a9a;"></div>
<div class="a" style="left:526px;top:728px;width:10px;height:1px;border-top:1px dotted #9a9a9a;"></div>
<div class="a" style="left:510px;top:485px;width:5px;height:1px;border-top:1px dotted #9a9a9a;"></div>
<div class="a" style="left:531px;top:507px;width:5px;height:1px;border-top:1px dotted #9a9a9a;"></div>
<div class="a" style="left:531px;top:595px;width:5px;height:1px;border-top:1px dotted #9a9a9a;"></div>
<svg style="left:484px;top:480px" width="7" height="12" viewBox="0 0 7 12"><path d="M0 0 L7 6 L0 12 Z" fill="#111"/></svg>
<div class="a" style="left:943px;top:420px;width:6px;height:330px;background:#f0f0f0;"></div>
<div class="a" style="left:479px;top:978px;width:464px;height:21px;background:#f6f6f6;"></div>
<div class="a" style="left:479px;top:998px;width:464px;height:1px;background:#8a8a8a;"></div>
<div class="a" style="left:479px;top:978px;width:21px;height:21px;background:#f0f0f0;border:1px solid #2a2a2a;"></div>
<svg style="left:486px;top:983px" width="6" height="10" viewBox="0 0 6 10"><path d="M6 0 L0 5 L6 10 Z" fill="#111"/></svg>
<div class="a" style="left:499px;top:978px;width:201px;height:21px;background:#f0f0f0;border:1px solid #2a2a2a;"></div>
<div class="a" style="left:451px;top:1027px;width:492px;height:20px;background:#f6f6f6;"></div>
<div class="a" style="left:451px;top:1027px;width:20px;height:20px;background:#f0f0f0;border:1px solid #2a2a2a;"></div>
<svg style="left:458px;top:1032px" width="6" height="10" viewBox="0 0 6 10"><path d="M6 0 L0 5 L6 10 Z" fill="#111"/></svg>
<div class="a" style="left:470px;top:1027px;width:160px;height:20px;background:#f0f0f0;border:1px solid #2a2a2a;"></div>
<div class="a" style="left:922px;top:1027px;width:21px;height:20px;background:#f0f0f0;border:1px solid #2a2a2a;"></div>
<svg style="left:930px;top:1032px" width="6" height="10" viewBox="0 0 6 10"><path d="M0 0 L6 5 L0 10 Z" fill="#111"/></svg>
<svg style="left:598px;top:147.500px" width="26.6" height="36" viewBox="0 0 28 38"><path d="M2 2.5 L2 31.5 L8.5 25.5 L13.5 36 L18.5 33.5 L13.8 23.8 L23.5 23.8 Z" fill="#fff" stroke="#16222e" stroke-width="2.2" stroke-linejoin="miter"/></svg>
<div class="a" style="left:949px;top:127px;width:1px;height:921px;background:#a8a8a8;"></div>
<div class="a" style="left:949px;top:103px;width:1px;height:24px;background:#e4e4e4;"></div>
<div class="a" style="left:950px;top:126px;width:6px;height:922px;background:#f5f5f5;"></div>
<div class="a" style="left:956px;top:126px;width:1px;height:922px;background:#a8a8a8;"></div>
<div class="a" style="left:957px;top:126px;width:14px;height:922px;background:linear-gradient(90deg,#f8f8f8,#ececec);"></div>
<div class="a" style="left:971px;top:126px;width:1px;height:922px;background:#a8a8a8;"></div>
<svg style="left:964px;top:586px" width="5" height="8" viewBox="0 0 5 8"><path d="M0.5 0.5 L4 4 L0.5 7.5" stroke="#555" stroke-width="1.2" fill="none"/></svg>
<div class="a" style="left:972px;top:126px;width:924px;height:922px;background:#f0f0f0;"></div>
<div class="a" style="left:950px;top:103px;width:946px;height:24px;background:#fff;"></div>
<div class="a" style="left:950px;top:127px;width:946px;height:1px;background:#e2e2e2;"></div>
<svg style="left:954px;top:105px" width="18" height="18" viewBox="0 0 18 18"><path d="M14.5 3.5 A8 8 0 1 0 16 12" stroke="#333" stroke-width="1.3" fill="none"/><rect x="6" y="4.5" width="6" height="9" fill="#fdf8e0" stroke="#333" stroke-width="1.1"/><path d="M7.5 10 L9 8 L10.5 10" stroke="#555" fill="none" stroke-width="0.8"/><circle cx="16" cy="6" r="0.8" fill="#777"/><circle cx="16.5" cy="9" r="0.8" fill="#999"/></svg>
<span class="t" style="left:977.5px;top:108.95px;font-size:14px;line-height:14px;color:#555;letter-spacing:-0.759px;">Messages</span>
<div class="a" style="left:1800px;top:107px;width:29px;height:17px;background:#e6e6e6;border:1px solid #dadada;"></div>
<svg style="left:1808px;top:114px" width="11" height="7" viewBox="0 0 11 7"><path d="M0.800 0.800 L5.500 5.500 L10.200 0.800" stroke="#555" stroke-width="1.300" fill="none"/></svg>
<div class="a" style="left:1831px;top:107px;width:28px;height:17px;background:#c6d6ea;border:1px solid #a4b8d2;border-radius:2px;"></div>
<div class="a" style="left:1837.5px;top:109px;width:14px;height:11px;background:#f4f8fc;border:1px solid #44546c;border-radius:1.5px;border-top-width:1.5px;"></div>
<div class="a" style="left:1841.5px;top:113px;width:6px;height:4px;background:#f4f8fc;border:1px solid #44546c;"></div>
<div class="a" style="left:1861px;top:107px;width:29px;height:17px;background:#c6d6ea;border:1px solid #a4b8d2;border-radius:2px;"></div>
<svg style="left:1868px;top:109.5px" width="15" height="12" viewBox="0 0 15 12"><path d="M2 1.500 L13 10.500 M13 1.500 L2 10.500" stroke="#5a6478" stroke-width="4" fill="none"/><path d="M2 1.500 L13 10.500 M13 1.500 L2 10.500" stroke="#f8fafc" stroke-width="2.400" fill="none"/></svg>
<div class="a" style="left:976px;top:132.7px;width:104px;height:24.6px;background:#c6e0f7;border:1px solid #3a6eaa;"></div>
<svg style="left:997px;top:136px" width="20" height="18" viewBox="0 0 20 18"><path d="M14 2.5 A7.6 7.6 0 1 0 16.5 11" stroke="#444" stroke-width="1.5" fill="none"/><path d="M0 9 L5 9 L7 5.5 L9 12 L11 7 L12.5 9.5 L19 9" stroke="#86b43c" stroke-width="1.7" fill="none"/><path d="M0 9 L3 7.500 L3 10.500 Z" fill="#86b43c"/><circle cx="15.5" cy="4.5" r="1" fill="#222"/></svg>
<span class="t" style="left:1022px;top:137.48px;font-size:15.5px;line-height:15.5px;color:#1a1a1a;letter-spacing:-0.153px;">Scroll</span>
<div class="a" style="left:1091px;top:133px;width:132px;height:24px;background:#e1e1e1;border:1px solid #cdcdcd;"></div>
<svg style="left:1123px;top:135px" width="18" height="20" viewBox="0 0 18 20"><rect x="1" y="1" width="15" height="11" fill="#f4f8fc" stroke="#a8bcd8"/><rect x="1" y="1" width="15" height="2" fill="#4a82c8"/><circle cx="9" cy="8" r="4.2" fill="#e8f4f8" stroke="#8a8a8a" stroke-width="1.3"/><path d="M6 11.5 L1.5 17" stroke="#b89858" stroke-width="2"/></svg>
<span class="t" style="left:1147px;top:137.48px;font-size:15.5px;line-height:15.5px;color:#1a1a1a;letter-spacing:-0.232px;">Details</span>
<div class="a" style="left:1237px;top:138px;width:16px;height:16px;background:#fff;border:1px solid #333;"></div>
<svg style="left:1239px;top:141px" width="12" height="10" viewBox="0 0 12 10"><path d="M1 4.5 L4.5 8.5 L11 1" stroke="#222" stroke-width="1.4" fill="none"/></svg>
<span class="t" style="left:1257.5px;top:138.48px;font-size:15.5px;line-height:15.5px;color:#1a1a1a;letter-spacing:-0.716px;">Expand</span>
<div class="a" style="left:1356px;top:133px;width:29px;height:24px;background:#e1e1e1;border:1px solid #cdcdcd;"></div>
<span class="t" style="left:1365.5px;top:137.46px;font-size:16px;line-height:16px;color:#111;font-weight:bold;">9</span>
<div class="a" style="left:1396px;top:133px;width:97px;height:24px;background:#e1e1e1;border:1px solid #cdcdcd;"></div>
<svg style="left:1400px;top:140px" width="20" height="11" viewBox="0 0 20 11"><path d="M1.5 9.5 L6 2 L10 9.5 Z" stroke="#111" stroke-width="2" fill="none" stroke-linejoin="round"/><path d="M11 1.5 L19 1.5 M15 1.5 L15 10.5" stroke="#111" stroke-width="2.4" fill="none"/></svg>
<span class="t" style="left:1424.5px;top:137.68px;font-size:15.5px;line-height:15.5px;color:#1a1a1a;letter-spacing:0.281px;">Time Abs</span>
<div class="a" style="left:1497px;top:133px;width:83px;height:24px;background:#e1e1e1;border:1px solid #cdcdcd;"></div>
<svg style="left:1507px;top:134.500px" width="17" height="18" viewBox="0 0 17 18"><path d="M5.200 9.500 L5.200 3.600 Q5.200 2.400 6.200 2.400 Q7.200 2.400 7.200 3.600 L7.200 2 Q7.200 0.800 8.200 0.800 Q9.200 0.800 9.200 2 L9.200 2.600 Q9.200 1.500 10.200 1.500 Q11.200 1.500 11.200 2.700 L11.200 4 Q11.200 3 12.200 3 Q13.200 3 13.200 4.200 L13.200 11.500 Q13.200 16.800 9 16.800 Q6.200 16.800 4.600 14.200 L1 9.400 Q0.600 8 2 8 Q3 8 5.200 10.800 Z" fill="#fff" stroke="#2a2a2a" stroke-width="1"/><path d="M7.200 3.600 V8.500 M9.200 2.600 V8.500 M11.200 4 V8.500" stroke="#2a2a2a" stroke-width="0.900"/></svg>
<span class="t" style="left:1531px;top:137.68px;font-size:15.5px;line-height:15.5px;color:#1a1a1a;letter-spacing:-0.738px;">Pause</span>
<div class="a" style="left:1584px;top:133px;width:85px;height:24px;background:#e1e1e1;border:1px solid #cdcdcd;"></div>
<svg style="left:1598px;top:136.500px" width="17" height="17" viewBox="0 0 17 17"><rect x="0.300" y="0.300" width="16.400" height="16.400" fill="#1a1a1a"/><rect x="3" y="0.800" width="11.500" height="7" fill="#4060e0"/><path d="M5 6 V3 H7 V6 M9 6 V3 M11 6 V3 H12.500 V6" stroke="#e8ecff" stroke-width="0.900" fill="none"/><rect x="9" y="10.500" width="6" height="6" fill="#b0b0a8"/><rect x="10" y="11.500" width="2" height="4" fill="#3a3a3a"/><rect x="1.500" y="10.500" width="7" height="5.800" fill="#0a0a0a"/></svg>
<span class="t" style="left:1622.5px;top:137.68px;font-size:15.5px;line-height:15.5px;color:#1a1a1a;letter-spacing:-0.781px;">Save</span>
<div class="a" style="left:1680px;top:133px;width:87px;height:24px;background:#e1e1e1;border:1px solid #cdcdcd;"></div>
<svg style="left:1693px;top:136px" width="18" height="17" viewBox="0 0 18 17"><path d="M1.500 1 L15.500 15.500" stroke="#111" stroke-width="2.600" stroke-linecap="round" fill="none"/><path d="M16 0.800 L2 15.800" stroke="#111" stroke-width="1.300" fill="none"/><path d="M2.500 14 L1.200 16.200" stroke="#111" stroke-width="2.200" stroke-linecap="round"/></svg>
<span class="t" style="left:1717.5px;top:137.68px;font-size:15.5px;line-height:15.5px;color:#1a1a1a;letter-spacing:-0.500px;">Erase</span>
<div class="a" style="left:1774px;top:133px;width:35px;height:24px;background:#e1e1e1;border:1px solid #cdcdcd;"></div>
<div class="a" style="left:1790px;top:137px;width:12px;height:9px;background:#e4e8f0;border:1px solid #4a4a52;border-top:2px solid #5a6888;"></div>
<div class="a" style="left:1787px;top:140px;width:12px;height:9px;background:#e4e8f0;border:1px solid #4a4a52;border-top:2px solid #5a6888;"></div>
<div class="a" style="left:1784px;top:143px;width:13px;height:11px;background:#e8ecf4;border:1px solid #4a4a52;border-top:2px solid #5a6888;"></div>
<span class="t" style="left:1827px;top:137.68px;font-size:15.5px;line-height:15.5px;color:#1a1a1a;letter-spacing:-0.117px;">Find:</span>
<div class="a" style="left:1866px;top:130px;width:30px;height:30px;background:#e4e4e4;border:1px solid #d0d0d0;border-right:none;"></div>
<span class="t" style="left:1871px;top:137.68px;font-size:15.5px;line-height:15.5px;color:#1a1a1a;letter-spacing:-0.312px;">Arb</span>
<div class="a" style="left:977px;top:168px;width:13px;height:832px;background:#fff;border-radius:2px;box-shadow:0 0 2px #fff;"></div>
<div class="a" style="left:994px;top:161px;width:902px;height:827px;background:#fff;"></div>
<div class="a" style="left:994px;top:161px;width:902px;height:25px;background:#f0f0f0;"></div>
<div class="a" style="left:994px;top:186px;width:62px;height:26px;background:#f0f0f0;"></div>
<div class="a" style="left:994px;top:212px;width:62px;height:776px;background:#ece9d8;"></div>
<div class="a" style="left:1056px;top:212px;width:840px;height:26px;background:#c8fcc4;"></div>
<div class="a" style="left:993px;top:161px;width:1px;height:827px;background:#a0a0a0;"></div>
<div class="a" style="left:994px;top:160px;width:902px;height:1px;background:#dedede;"></div>
<div class="a" style="left:994px;top:185px;width:902px;height:1px;background:#8a8a8a;"></div>
<div class="a" style="left:994px;top:211px;width:902px;height:1px;background:#6a6a6a;"></div>
<div class="a" style="left:1055px;top:161px;width:1px;height:51px;background:#8a8a8a;"></div>
<div class="a" style="left:1131px;top:161px;width:1px;height:51px;background:#8a8a8a;"></div>
<div class="a" style="left:1241px;top:161px;width:1px;height:51px;background:#8a8a8a;"></div>
<div class="a" style="left:1272px;top:161px;width:1px;height:51px;background:#8a8a8a;"></div>
<div class="a" style="left:1302px;top:161px;width:1px;height:51px;background:#8a8a8a;"></div>
<div class="a" style="left:1489px;top:161px;width:1px;height:51px;background:#8a8a8a;"></div>
<div class="a" style="left:1600px;top:161px;width:1px;height:51px;background:#8a8a8a;"></div>
<div class="a" style="left:1630px;top:161px;width:1px;height:51px;background:#8a8a8a;"></div>
<div class="a" style="left:1829px;top:161px;width:1px;height:51px;background:#8a8a8a;"></div>
<span class="t" style="left:1058.5px;top:166.91px;font-size:12.8px;line-height:12.8px;color:#1a1a1a;letter-spacing:-0.401px;">Line</span>
<span class="t" style="left:1135.5px;top:166.91px;font-size:12.8px;line-height:12.8px;color:#1a1a1a;letter-spacing:0.119px;">Time (abs/rel)</span>
<span class="t" style="left:1246px;top:166.91px;font-size:12.8px;line-height:12.8px;color:#1a1a1a;letter-spacing:-1.219px;">Tx</span>
<span class="t" style="left:1276px;top:166.91px;font-size:12.8px;line-height:12.8px;color:#1a1a1a;letter-spacing:-1.500px;">Er</span>
<span class="t" style="left:1306.5px;top:166.91px;font-size:12.8px;line-height:12.8px;color:#1a1a1a;letter-spacing:0.098px;">Description</span>
<span class="t" style="left:1493.5px;top:166.91px;font-size:12.8px;line-height:12.8px;color:#1a1a1a;letter-spacing:0.307px;">ArbId/Header</span>
<span class="t" style="left:1603.5px;top:166.91px;font-size:12.8px;line-height:12.8px;color:#1a1a1a;letter-spacing:-0.430px;">Len</span>
<span class="t" style="left:1634px;top:166.91px;font-size:12.8px;line-height:12.8px;color:#1a1a1a;letter-spacing:0.244px;">DataBytes</span>
<span class="t" style="left:1833.5px;top:166.91px;font-size:12.8px;line-height:12.8px;color:#1a1a1a;letter-spacing:0.260px;">Network</span>
<span class="t" style="left:997.5px;top:192.07px;font-size:13.5px;line-height:13.5px;color:#1a1a1a;letter-spacing:-0.400px;">Filter</span>
<div class="a" style="left:994px;top:988px;width:902px;height:20px;background:#f0f0f0;"></div>
<svg style="left:1001px;top:993px" width="7" height="11" viewBox="0 0 7 11"><path d="M6 0.8 L1.2 5.5 L6 10.2" stroke="#444" stroke-width="1.8" fill="none"/></svg>
<div class="a" style="left:1016px;top:990px;width:20px;height:17px;background:#cdcdcd;"></div>
<svg style="left:1883px;top:993px" width="7" height="11" viewBox="0 0 7 11"><path d="M1 0.8 L5.8 5.5 L1 10.2" stroke="#444" stroke-width="1.8" fill="none"/></svg>
<div class="a" style="left:972px;top:1008px;width:924px;height:40px;background:#f0f0f0;border:1px solid #cfcfcf;border-bottom:1px solid #6a6a6a;border-right:1px solid #8a8a8a;border-left:none;"></div>
<div class="a" style="left:977px;top:1014px;width:35px;height:28px;background:#b9d7f3;"></div>
<div class="a" style="left:1064px;top:1014px;width:35px;height:28px;background:#b9d7f3;"></div>
<div class="a" style="left:1055px;top:1015px;width:1px;height:26px;background:#8a8a8a;"></div>
<div class="a" style="left:1295px;top:1015px;width:1px;height:26px;background:#8a8a8a;"></div>
<svg style="left:985px;top:1018px" width="22" height="20" viewBox="0 0 22 20"><rect x="10" y="2" width="5" height="5" fill="#5ad8e8"/><rect x="12" y="5" width="5" height="4" fill="#4ac84a"/><rect x="17" y="2" width="3" height="4" fill="#c82838"/><rect x="17" y="6" width="3" height="3" fill="#1a2a8a"/><path d="M9 9 L11 16 L14 10" stroke="#8ab040" stroke-width="2.2" fill="none"/><rect x="3" y="12" width="4" height="4" fill="none" stroke="#223a6a" stroke-width="1.2"/><rect x="17" y="12" width="4" height="4" fill="none" stroke="#222" stroke-width="1.2"/></svg>
<svg style="left:1021px;top:1017px" width="24" height="22" viewBox="0 0 24 22"><rect x="10" y="3" width="6" height="6" fill="#7ad85a"/><rect x="16" y="2" width="3" height="4" fill="#a83838"/><rect x="16" y="6" width="3" height="3" fill="#1a2a8a"/><rect x="9" y="6" width="3" height="4" fill="#e89870"/><rect x="1.5" y="1.500" width="3" height="3" fill="#fff" stroke="#222"/><path d="M5 3 L9 3" stroke="#222"/><rect x="2.500" y="10.500" width="3" height="3" fill="#fff" stroke="#222"/><path d="M6 12 L11 12 L11 14 L18 14 M8 12 L8 17" stroke="#222" stroke-width="1.2" fill="none"/><rect x="17.500" y="13.500" width="3" height="3" fill="#fff" stroke="#222"/><rect x="6.500" y="17.500" width="3" height="3" fill="#fff" stroke="#222"/></svg>
<span class="t" style="left:1072px;top:1023.69px;font-size:11px;line-height:11px;color:#3a4a60;font-family:'Liberation Mono', monospace;letter-spacing:0.094px;">×FF</span>
<span class="t" style="left:1111px;top:1022.27px;font-size:11.5px;line-height:11.5px;color:#222;letter-spacing:0.500px;">.00</span>
<span class="t" style="left:1150px;top:1023.53px;font-size:10px;line-height:10px;color:#444;font-family:'Liberation Mono', monospace;letter-spacing:0.984px;">AB</span>
<span class="t" style="left:1187px;top:1023.11px;font-size:10.5px;line-height:10.5px;color:#222;font-family:'Liberation Mono', monospace;letter-spacing:0.391px;">10</span>
<span class="t" style="left:1226px;top:1020.73px;font-size:14.5px;line-height:14.5px;color:#333;font-family:'Liberation Sans', 'Noto Sans CJK SC', sans-serif;">词</span>
<div class="a" style="left:1224px;top:1030px;width:6px;height:6px;background:#3ad83a;border-radius:50%;"></div>
<span class="t" style="left:1263px;top:1020.73px;font-size:14.5px;line-height:14.5px;color:#333;font-family:'Liberation Sans', 'Noto Sans CJK SC', sans-serif;">词</span>
<div class="a" style="left:1275px;top:1030px;width:6px;height:6px;background:#3ad83a;border-radius:50%;"></div>
<svg style="left:1310px;top:1017px" width="22" height="22" viewBox="0 0 22 22"><path d="M14 3 L8 3 L11.5 7.5 L8 12 L14 12" stroke="#222" stroke-width="1.2" fill="none"/><path d="M7 17 L10 19 L12 16 L15 17.5" stroke="#d8c840" stroke-width="1.6" fill="none"/><rect x="1.500" y="15.500" width="3" height="3" fill="#fff" stroke="#222"/><rect x="17.500" y="15.500" width="3" height="3" fill="#fff" stroke="#222"/></svg>
<span class="t" style="left:1362px;top:1022.38px;font-size:15.5px;line-height:15.5px;color:#1a1a1a;letter-spacing:-0.029px;">Columns</span>
<div class="a" style="left:1430px;top:1013px;width:159px;height:30px;background:#e2e2e2;border:1px solid #cfcfcf;"></div>
<span class="t" style="left:1434px;top:1021.38px;font-size:15.5px;line-height:15.5px;color:#1a1a1a;letter-spacing:0.641px;">(default)</span>
<svg style="left:1572px;top:1025px" width="12" height="8" viewBox="0 0 12 8"><path d="M0.8 0.8 L6 6 L11.2 0.8" stroke="#444" stroke-width="1.4" fill="none"/></svg>
<div class="a" style="left:1592px;top:1015px;width:119px;height:26px;background:#e1e1e1;border:1px solid #cdcdcd;"></div>
<span class="t" style="left:1622px;top:1021.38px;font-size:15.5px;line-height:15.5px;color:#1a1a1a;letter-spacing:0.158px;">Setup ...</span>
<div class="a" style="left:1726px;top:1014px;width:163px;height:29px;background:#fff;border:1px solid #3a3a3a;"></div>
<span class="t" style="left:1730px;top:1019.88px;font-size:15.5px;line-height:15.5px;color:#1a1a1a;letter-spacing:0.182px;">Review Buffer...</span>
<div class="a" style="left:1896px;top:103px;width:24px;height:945px;background:#fff;"></div>
<div class="a" style="left:1896px;top:103px;width:1px;height:702px;background:#e4e4e4;"></div>
<div class="a" style="left:1897px;top:191px;width:23px;height:1px;background:#b4b4b4;"></div>
<div class="a" style="left:1909px;top:158px;width:4px;height:4px;background:#111;border-radius:50%;"></div>
<div class="a" style="left:1897px;top:252px;width:23px;height:1px;background:#b4b4b4;"></div>
<div class="a" style="left:1909px;top:220px;width:4px;height:4px;background:#111;border-radius:50%;"></div>
<div class="a" style="left:1897px;top:313px;width:23px;height:1px;background:#b4b4b4;"></div>
<div class="a" style="left:1909px;top:281px;width:4px;height:4px;background:#111;border-radius:50%;"></div>
<div class="a" style="left:1897px;top:375px;width:23px;height:1px;background:#b4b4b4;"></div>
<div class="a" style="left:1909px;top:342px;width:4px;height:4px;background:#111;border-radius:50%;"></div>
<div class="a" style="left:1897px;top:436px;width:23px;height:1px;background:#b4b4b4;"></div>
<div class="a" style="left:1909px;top:404px;width:4px;height:4px;background:#111;border-radius:50%;"></div>
<div class="a" style="left:1897px;top:498px;width:23px;height:1px;background:#b4b4b4;"></div>
<div class="a" style="left:1909px;top:465px;width:4px;height:4px;background:#111;border-radius:50%;"></div>
<div class="a" style="left:1897px;top:559px;width:23px;height:1px;background:#b4b4b4;"></div>
<div class="a" style="left:1909px;top:526px;width:4px;height:4px;background:#111;border-radius:50%;"></div>
<div class="a" style="left:1897px;top:620px;width:23px;height:1px;background:#b4b4b4;"></div>
<div class="a" style="left:1909px;top:588px;width:4px;height:4px;background:#111;border-radius:50%;"></div>
<div class="a" style="left:1897px;top:682px;width:23px;height:1px;background:#b4b4b4;"></div>
<div class="a" style="left:1909px;top:649px;width:4px;height:4px;background:#111;border-radius:50%;"></div>
<div class="a" style="left:1897px;top:743px;width:23px;height:1px;background:#b4b4b4;"></div>
<div class="a" style="left:1909px;top:711px;width:4px;height:4px;background:#111;border-radius:50%;"></div>
<div class="a" style="left:1897px;top:804px;width:23px;height:1px;background:#b4b4b4;"></div>
<div class="a" style="left:1909px;top:772px;width:4px;height:4px;background:#111;border-radius:50%;"></div>
<svg style="left:1902px;top:109px" width="20" height="14" viewBox="0 0 20 14"><rect x="1" y="3.500" width="19" height="9.500" rx="2.500" fill="#4a4a4a"/><rect x="4" y="0.500" width="4.500" height="3.500" rx="1" fill="#8a8a8a"/><circle cx="10" cy="8.300" r="3.600" fill="#b4d0ea" stroke="#2a2a2a" stroke-width="0.800"/><circle cx="9.300" cy="7.600" r="1.300" fill="#eaf4fc"/></svg>
<div class="a" style="left:0px;top:1048px;width:1920px;height:28px;background:#fff;"></div>
<div class="a" style="left:0px;top:1076px;width:1920px;height:4px;background:#1d5572;"></div>
<div class="a" style="left:0px;top:1048px;width:30px;height:28px;background:#f6f6f6;"></div>
<svg style="left:3px;top:1056px" width="20" height="15" viewBox="0 0 20 15"><rect x="0.500" y="4" width="19" height="10" rx="2.500" fill="#5a5a5a"/><rect x="5" y="1" width="5" height="3.500" rx="1" fill="#a8a8a8"/><circle cx="9.500" cy="9" r="3.600" fill="#c4d8ec" stroke="#3a3a3a" stroke-width="0.800"/><circle cx="8.800" cy="8.300" r="1.300" fill="#f0f6fc"/></svg>
<div class="a" style="left:95px;top:1060px;width:4px;height:4px;background:#111;border-radius:50%;"></div>
<span class="t" style="left:112.5px;top:1054.85px;font-size:14px;line-height:14px;color:#8c8c8c;letter-spacing:1.119px;">(edit)</span>
<div class="a" style="left:207px;top:1049px;width:1px;height:27px;background:#f0f0f0;"></div>
<div class="a" style="left:267px;top:1060px;width:4px;height:4px;background:#111;border-radius:50%;"></div>
<span class="t" style="left:284.5px;top:1054.85px;font-size:14px;line-height:14px;color:#8c8c8c;letter-spacing:1.119px;">(edit)</span>
<div class="a" style="left:374px;top:1049px;width:1px;height:27px;background:#f0f0f0;"></div>
<div class="a" style="left:434px;top:1060px;width:4px;height:4px;background:#111;border-radius:50%;"></div>
<span class="t" style="left:451.5px;top:1054.85px;font-size:14px;line-height:14px;color:#8c8c8c;letter-spacing:1.119px;">(edit)</span>
<div class="a" style="left:541px;top:1049px;width:1px;height:27px;background:#f0f0f0;"></div>
<div class="a" style="left:601px;top:1060px;width:4px;height:4px;background:#111;border-radius:50%;"></div>
<span class="t" style="left:618.5px;top:1054.85px;font-size:14px;line-height:14px;color:#8c8c8c;letter-spacing:1.119px;">(edit)</span>
<div class="a" style="left:708px;top:1049px;width:1px;height:27px;background:#f0f0f0;"></div>
<div class="a" style="left:768px;top:1060px;width:4px;height:4px;background:#111;border-radius:50%;"></div>
<span class="t" style="left:785.5px;top:1054.85px;font-size:14px;line-height:14px;color:#8c8c8c;letter-spacing:1.119px;">(edit)</span>
<div class="a" style="left:875px;top:1049px;width:1px;height:27px;background:#f0f0f0;"></div>
<div class="a" style="left:935px;top:1060px;width:4px;height:4px;background:#111;border-radius:50%;"></div>
<span class="t" style="left:952.5px;top:1054.85px;font-size:14px;line-height:14px;color:#8c8c8c;letter-spacing:1.119px;">(edit)</span>
<div class="a" style="left:1042px;top:1049px;width:1px;height:27px;background:#f0f0f0;"></div>
<div class="a" style="left:1102px;top:1060px;width:4px;height:4px;background:#111;border-radius:50%;"></div>
<span class="t" style="left:1119.5px;top:1054.85px;font-size:14px;line-height:14px;color:#8c8c8c;letter-spacing:1.119px;">(edit)</span>
<div class="a" style="left:1208px;top:1048px;width:1px;height:28px;background:#9a9a9a;"></div>
<div class="a" style="left:1571px;top:1049px;width:349px;height:1px;background:#c8c8c8;"></div>
<div class="a" style="left:1571px;top:1049px;width:1px;height:27px;background:#bdbdbd;"></div>
<div class="a" style="left:1748px;top:1049px;width:1px;height:27px;background:#bdbdbd;"></div>
<span class="t" style="left:1626px;top:1055.46px;font-size:16px;line-height:16px;color:#8a8a8a;letter-spacing:1.167px;">3.9.3.17</span>
<span class="t" style="left:1782.5px;top:1055.46px;font-size:16px;line-height:16px;color:#8a8a8a;letter-spacing:0.544px;">No Bus Errors</span>
</body></html>
